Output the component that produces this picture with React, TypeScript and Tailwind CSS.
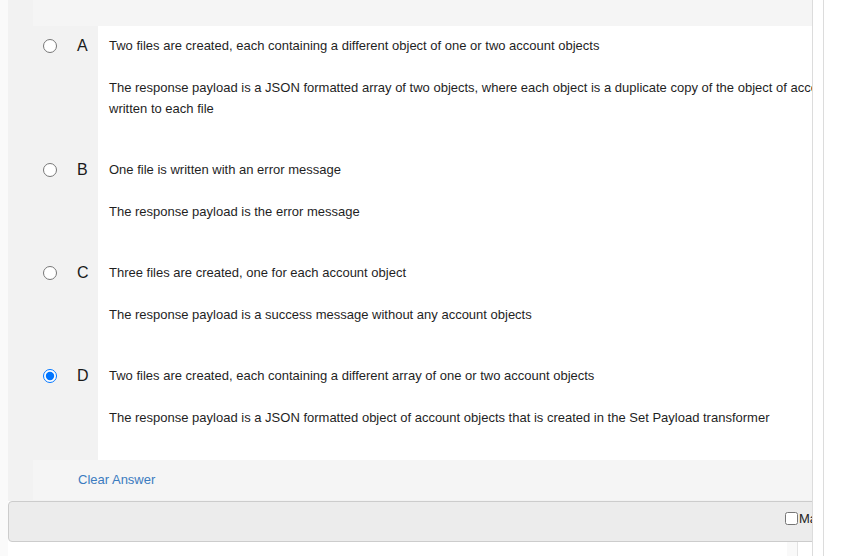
import type { ReactNode } from "react";

const options: { key: string; paragraphs: string[]; checked?: boolean }[] = [
  {
    key: "A",
    paragraphs: [
      "Two files are created, each containing a different object of one or two account objects",
      "The response payload is a JSON formatted array of two objects, where each object is a duplicate copy of the object of account objects written to each file",
    ],
  },
  {
    key: "B",
    paragraphs: ["One file is written with an error message", "The response payload is the error message"],
  },
  {
    key: "C",
    paragraphs: [
      "Three files are created, one for each account object",
      "The response payload is a success message without any account objects",
    ],
  },
  {
    key: "D",
    checked: true,
    paragraphs: [
      "Two files are created, each containing a different array of one or two account objects",
      "The response payload is a JSON formatted object of account objects that is created in the Set Payload transformer",
    ],
  },
];

function OptionRow({ letter, checked, last, children }: { letter: string; checked?: boolean; last?: boolean; children: ReactNode }) {
  return (
    <div className="flex">
      <div className="w-[90px] shrink-0 pl-[35px] pt-[9px]">
        <div className="flex h-[21px] items-center">
          <input type="radio" name="answer" checked={!!checked} readOnly className="m-0 h-[14px] w-[14px]" />
          <span className="ml-[20px] text-[16px] text-[#1a1a1a]">{letter}</span>
        </div>
      </div>
      <div
        className={`flex-1 bg-white pl-[11px] pr-[15px] pt-[9px] text-[13px] leading-[21px] text-[#1f1f1f] ${last ? "pb-[11px]" : "pb-[10px]"}`}
      >
        {children}
      </div>
    </div>
  );
}

export default function App() {
  return (
    <div className="flex h-[556px] overflow-hidden bg-white" style={{ fontFamily: '"Liberation Sans", Arial, sans-serif' }}>
      <div className="w-2 shrink-0 bg-[#fafafa]" />
      <div className="w-[805px] shrink-0 overflow-hidden border-r border-[#dcdcdc]">
        <div className="w-[920px]">
          <div className="bg-[#f2f2f2] pb-px">
            <div className="ml-[25px] h-[26px] bg-[#f5f5f5]" />
            {options.map((option, index) => (
              <OptionRow key={option.key} letter={option.key} checked={option.checked} last={index === options.length - 1}>
                {option.paragraphs.map((text) => (
                  <p key={text} className="mb-[21px]">
                    {text}
                  </p>
                ))}
              </OptionRow>
            ))}
            <div className="ml-[25px] flex h-[40px] items-center bg-[#f5f5f5] pl-[45px] text-[13px] text-[#3b7bbf]">
              Clear Answer
            </div>
          </div>
          <div className="flex h-[41px] items-center rounded-[4px] border border-[#cccccc] bg-[#ececec] pb-[6px] pl-[776px] text-[13px] text-[#222]">
            <input type="checkbox" readOnly className="m-0 h-[13px] w-[13px]" />
            <span className="ml-px">Mark for Review</span>
          </div>
          <div className="flex h-[15px]">
            <div className="ml-[779px] w-[11px] border-r border-[#e3e3e3] bg-[#f9f9f9]" />
          </div>
        </div>
      </div>
      <div className="w-[11px] shrink-0 border-r border-[#dcdcdc]" />
      <div className="flex-1" />
    </div>
  );
}
